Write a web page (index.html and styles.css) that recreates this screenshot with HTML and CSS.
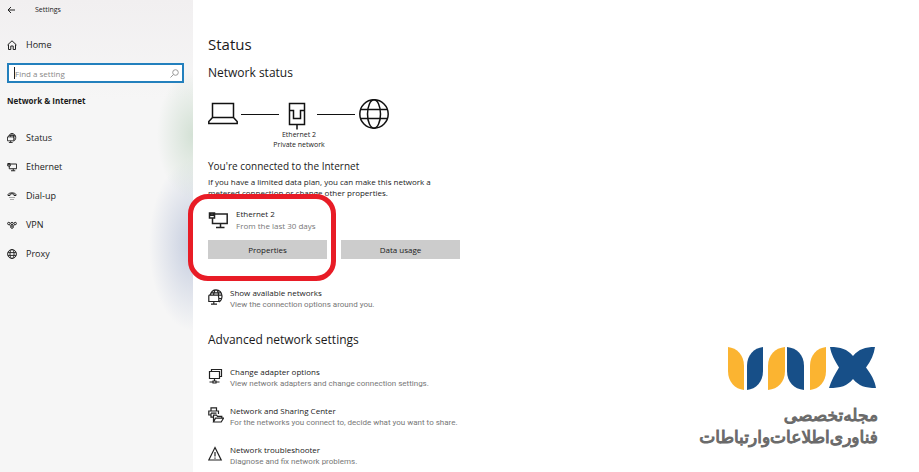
FILE: index.html
```html
<!DOCTYPE html>
<html lang="en">
<head>
    <meta charset="UTF-8">
    <meta name="viewport" content="width=device-width, initial-scale=1.0">
    <title>Settings</title>
    <link rel="stylesheet" href="styles.css">
</head>
<body>
    <div class="window">
        <aside class="sidebar">
            <header class="titlebar">
                <button type="button" class="back" aria-label="Back">
                    <svg width="8" height="8" viewBox="0 0 8 8"><path d="M8 4H1M4 1L1 4l3 3"/></svg>
                </button>
                <span>Settings</span>
            </header>

            <a class="nav-item home" href="#">
                <svg width="10" height="10" viewBox="0 0 10 10"><path d="M0.5 5L5 0.8L9.5 5M1.5 4.5V9.5H3.8V6H6.2V9.5H8.5V4.5"/></svg>
                Home
            </a>

            <form class="search">
                <input type="text" placeholder="Find a setting" aria-label="Find a setting">
                <span class="caret"></span>
                <svg width="9" height="9" viewBox="0 0 9 9"><circle cx="5.5" cy="3.5" r="2.8"/><path d="M3.5 5.5L0.5 8.5"/></svg>
            </form>

            <h2>Network &amp; Internet</h2>

            <nav>
                <a class="nav-item" href="#">
                    <svg width="10" height="10" viewBox="0 0 16 16"><use href="#icon-status" stroke-width="1.4"/></svg>
                    Status
                </a>
                <a class="nav-item" href="#">
                    <svg width="10" height="10" viewBox="0 0 20 20"><use href="#icon-ethernet" stroke-width="2"/></svg>
                    Ethernet
                </a>
                <a class="nav-item" href="#">
                    <svg width="10" height="10" viewBox="0 0 10 10"><path d="M1 4.5C0 1 10 1 9 4.5H7V3.2C6 2.6 4 2.6 3 3.2V4.5Z"/><path class="faint" d="M2 6.5h6M3 8.5h4"/></svg>
                    Dial-up
                </a>
                <a class="nav-item" href="#">
                    <svg width="10" height="10" viewBox="0 0 10 10"><circle cx="1.8" cy="3.5" r="1.2"/><circle cx="5" cy="3.5" r="1.2"/><circle cx="8.2" cy="3.5" r="1.2"/><circle cx="5" cy="7" r="1.3"/><path d="M2.4 4.7L4 6.4M7.6 4.7L6 6.4"/></svg>
                    VPN
                </a>
                <a class="nav-item" href="#">
                    <svg width="10" height="10" viewBox="0 0 32 32"><use href="#icon-globe" stroke-width="3"/></svg>
                    Proxy
                </a>
            </nav>
        </aside>

        <main class="content">
            <h1>Status</h1>
            <h2>Network status</h2>

            <div class="diagram">
                <svg width="30" height="32" viewBox="0 0 30 32"><path d="M4.5 5.5h21v14h-21zM4.5 19.5L0.8 23.5v2h28.4v-2L25.5 19.5"/></svg>
                <span class="wire"></span>
                <svg width="32" height="32" viewBox="0 0 32 32"><path d="M7.5 5.5h15v21h-15zM7.5 12.5h4v8h7v-8h4M15 26.5v5"/></svg>
                <span class="wire"></span>
                <svg width="32" height="32" viewBox="0 0 32 32"><use href="#icon-globe"/></svg>
                <p>Ethernet 2<br>Private network</p>
            </div>

            <h3>You're connected to the Internet</h3>
            <p class="note">If you have a limited data plan, you can make this network a metered connection or change other properties.</p>

            <section class="connection">
                <div class="adapter">
                    <svg width="20" height="20" viewBox="0 0 20 20"><use href="#icon-ethernet"/></svg>
                    <div>
                        <strong>Ethernet 2</strong>
                        <small>From the last 30 days</small>
                    </div>
                </div>
                <div class="buttons">
                    <button type="button">Properties</button>
                    <button type="button">Data usage</button>
                </div>
                <!-- marker round the adapter -->
                <div class="highlight"></div>
            </section>

            <a class="link-row" href="#">
                <svg width="16" height="16" viewBox="0 0 16 16"><use href="#icon-status"/></svg>
                <span><strong>Show available networks</strong><small>View the connection options around you.</small></span>
            </a>

            <h2 class="advanced">Advanced network settings</h2>

            <a class="link-row" href="#">
                <svg width="16" height="16" viewBox="0 0 16 16"><path d="M3.5 3.5V1.5h10v7h-2M1.5 3.5h10v7h-10zM6.5 10.5v2.5M1.5 14h3.5M8 14h3.5M5 13h3v2h-3z"/></svg>
                <span><strong>Change adapter options</strong><small>View network adapters and change connection settings.</small></span>
            </a>
            <a class="link-row" href="#">
                <svg width="16" height="16" viewBox="0 0 16 16"><path d="M3 4V0.8h5.5V4M3 8H0.8V4h9.7v3M3 6.2h5.5M3 6.2v4h2M5.5 15V8.2h3l1 1.2h4.3v1.8M5.5 15l2-3.8h8L13.2 15z"/></svg>
                <span><strong>Network and Sharing Center</strong><small>For the networks you connect to, decide what you want to share.</small></span>
            </a>
            <a class="link-row" href="#">
                <svg width="16" height="16" viewBox="0 0 16 16"><path d="M7 1.5L13.2 14h-12.4zM7 6v4.5M7 11.5v1.2"/></svg>
                <span><strong>Network troubleshooter</strong><small>Diagnose and fix network problems.</small></span>
            </a>
        </main>

        <footer class="brand">
            <svg width="148" height="43" viewBox="0 0 148 43" role="img" aria-label="Unix">
                <path class="yellow" d="M0 0C9 1 16 8 16 19V43C7 42 0 35 0 24Z"/>
                <path class="blue" d="M35 0V24C35 35 28 42 19 43V19C19 8 26 1 35 0Z"/>
                <path class="yellow" d="M57 0V24C57 35 50 42 40 43V19C40 8 47 1 57 0Z"/>
                <path class="blue" d="M59 0C69 1 76 8 76 19V43C66 42 59 35 59 24Z"/>
                <path class="yellow" d="M98 0V24C98 35 91 42 82 43V19C82 8 89 1 98 0Z"/>
                <path class="blue" d="M102 0C113 0 119 2 125 9C131 2 137 0 147 0C146 7 143 14 138 20.5C143 27 147 34 148 41C137 41 131 39 125 32C119 39 113 41 101 41C103 34 107 27 111 20.5C107 14 103 7 102 0Z"/>
            </svg>
            <p lang="fa" dir="rtl">مجله‌تخصصی<br>فناوری‌اطلاعات‌و‌ارتباطات</p>
        </footer>
    </div>

    <!-- shared icons -->
    <svg class="defs" width="0" height="0" aria-hidden="true">
        <symbol id="icon-globe" viewBox="0 0 32 32">
            <circle cx="16" cy="16" r="14.2"/>
            <ellipse cx="16" cy="16" rx="6.5" ry="14.2"/>
            <path d="M3 11.5h26M3 20.5h26"/>
        </symbol>
        <symbol id="icon-ethernet" viewBox="0 0 20 20">
            <path d="M7 4h12.2v9.5H4.5V8M12.5 13.5v4M8 17.5h8.5M1.5 3h5v5h-5zM3 3v2.2h2V3"/>
        </symbol>
        <symbol id="icon-status" viewBox="0 0 16 16">
            <path d="M2.2 6C3 3 5.2 0.8 8 0.8C11.5 0.8 14 3.5 14 7C14 9.8 12.8 12 10.8 13M5.5 6C6 3 7 0.8 8 0.8C9.3 0.8 10.6 3 10.6 8.5M3.2 3.9h9.8M10.8 9.5h2.8M0.8 6.2h13M0.8 6.2v6.3h10v-4M5.8 12.5v2.7M3 15.2h6"/>
        </symbol>
    </svg>
</body>
</html>
```
FILE: styles.css
```css
* {
    box-sizing: border-box;
}

body {
    margin: 0;
    font-family: "Open Sans", "Noto Sans", sans-serif;
    font-size: 8px;
    line-height: 12px;
    color: #1a1a1a;
    background: #fff;
}

h1, h2, h3, p {
    margin: 0;
    font-weight: normal;
}

a {
    color: inherit;
    text-decoration: none;
}

svg {
    flex: none;
    fill: none;
    stroke: #222;
}

.defs {
    position: absolute;
}

.window {
    display: flex;
    min-height: 100vh;
}

/* left menu */
.sidebar {
    flex: none;
    width: 193px;
    padding: 0 9px 0 7px;
    background:
        radial-gradient(ellipse 36px 64px at 100% 135px, #cbdccdcc, #cbdccd00),
        radial-gradient(ellipse 44px 86px at 100% 245px, #c5cddf, #c5cddf00),
        linear-gradient(#f1eff0, #f6f6f6 100px);
}

.titlebar {
    display: flex;
    align-items: center;
    gap: 20px;
    height: 20px;
    font-size: 7px;
}

.back {
    display: flex;
    padding: 0;
    border: 0;
    background: none;
}

.nav-item {
    display: flex;
    align-items: center;
    gap: 9px;
    height: 29px;
    font-size: 9px;
}

.home {
    margin-top: 10px;
}

.faint {
    stroke: #aaa;
}

.search {
    position: relative;
    margin-top: 4px;
}

.search input {
    display: block;
    width: 100%;
    height: 20px;
    padding: 0 20px 0 6px;
    border: 2px solid #2380bd;
    font: inherit;
    background: #fff;
}

.search input::placeholder {
    color: #888;
}

.search svg {
    position: absolute;
    right: 5px;
    top: 6px;
    stroke: #999;
}

.caret {
    position: absolute;
    left: 7px;
    top: 4px;
    width: 1px;
    height: 12px;
    background: #222;
}

.sidebar h2 {
    margin: 12px 0 16px;
    font-size: 8px;
    font-weight: bold;
}

/* main column */
.content {
    flex: none;
    width: 290px;
    padding: 32px 15px 0;
}

.content h1 {
    font-size: 15px;
    line-height: 24px;
}

.content h2 {
    margin-top: 9px;
    font-size: 12px;
    line-height: 16px;
}

.diagram {
    display: grid;
    grid-template-columns: 30px 44px 32px 44px 32px;
    align-items: center;
    margin-top: 17px;
    justify-content: start;
}

.diagram svg {
    stroke: #111;
    stroke-width: 1.5;
}

.diagram p {
    grid-column: 1 / -1;
    font-size: 7px;
    line-height: 10px;
    text-align: center;
}

.wire {
    margin: 0 3px;
    border-top: 1px solid #111;
}

.content h3 {
    margin-top: 8px;
    font-size: 10px;
    line-height: 16px;
}

.note {
    margin-top: 2px;
    max-width: 240px;
    line-height: 11px;
}

.connection {
    position: relative;
    margin-top: 10px;
}

.adapter {
    display: flex;
    align-items: center;
    gap: 8px;
}

.adapter svg {
    stroke-width: 1.5;
}

strong, small {
    display: block;
    font-size: 8px;
    font-weight: normal;
}

small {
    color: #777;
}

.buttons {
    display: flex;
    gap: 14px;
    margin-top: 8px;
}

.buttons button {
    width: 119px;
    height: 19px;
    padding: 0;
    border: 0;
    font: inherit;
    color: inherit;
    background: #ccc;
}

.highlight {
    position: absolute;
    left: -20px;
    top: -14px;
    width: 148px;
    height: 87px;
    border: 5px solid #e81c26;
    border-radius: 20px;
}

.link-row {
    display: flex;
    gap: 6px;
    margin-bottom: 15px;
    white-space: nowrap;
}

.link-row:last-child {
    margin-bottom: 0;
}

.link-row svg {
    margin-top: 2px;
    stroke-width: 1.2;
}

.link-row small {
    font-family: Roboto, sans-serif;
}

.connection + .link-row {
    margin-top: 28px;
}

.content .advanced {
    margin: 21px 0 18px;
}

/* magazine logo, bottom right */
.brand {
    display: flex;
    flex: 1;
    flex-direction: column;
    align-items: flex-end;
    justify-content: flex-end;
    padding: 0 41px 24px 0;
}

.brand svg {
    margin-right: 2px;
    stroke: none;
}

.yellow {
    fill: #fbb431;
}

.blue {
    fill: #174f88;
}

.brand p {
    margin-top: 14px;
    font-family: "DejaVu Sans", sans-serif;
    font-size: 17px;
    line-height: 22px;
    color: #6a6a6a;
    -webkit-text-stroke: 1px #6a6a6a;
}
```
